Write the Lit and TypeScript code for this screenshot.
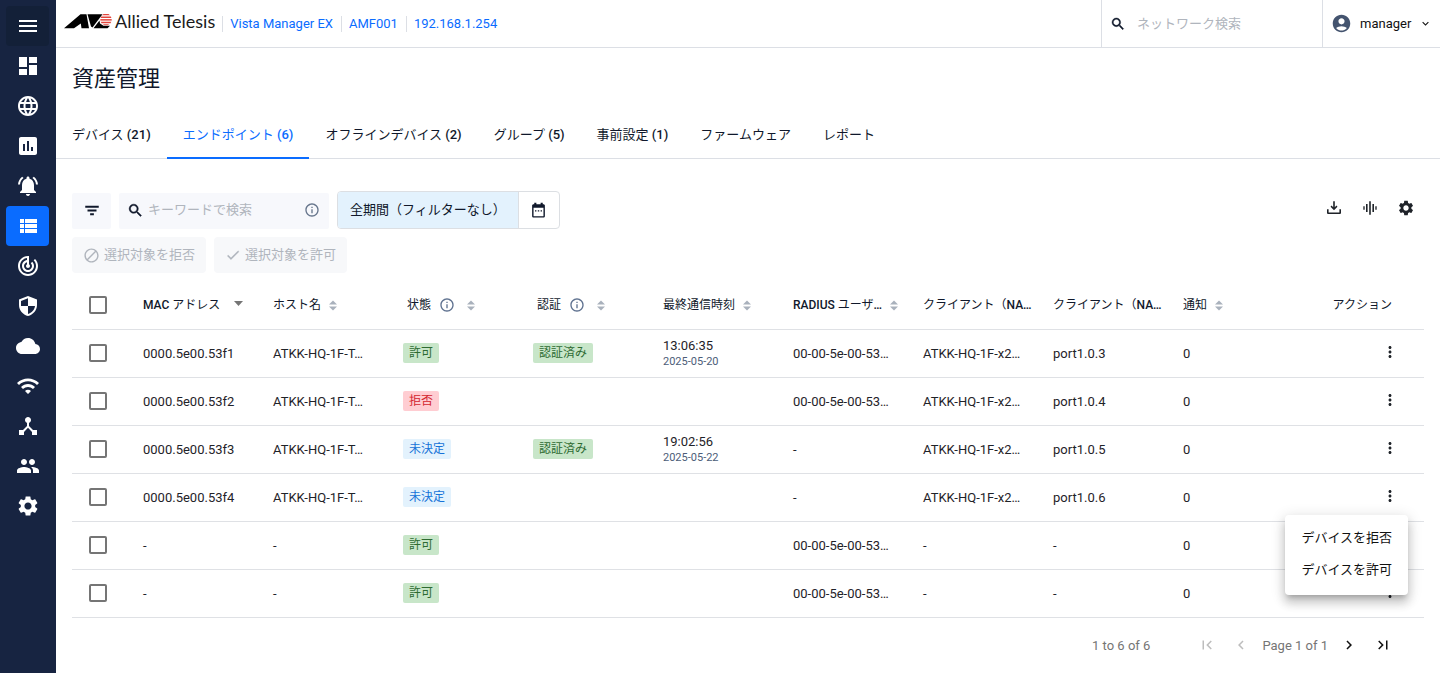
import { LitElement, html, css, svg, nothing } from "lit";
import { customElement, property, state } from "lit/decorators.js";
import { classMap } from "lit/directives/class-map.js";

const ICONS: Record<string, string> = {
  menu: "M3 18h18v-2H3v2zm0-5h18v-2H3v2zm0-7v2h18V6H3z",
  dashboard: "M3 13h8V3H3v10zm0 8h8v-6H3v6zm10 0h8V11h-8v10zm0-18v6h8V3h-8z",
  globe:
    "M11.99 2C6.47 2 2 6.48 2 12s4.47 10 9.99 10C17.52 22 22 17.52 22 12S17.52 2 11.99 2zm6.93 6h-2.95c-.32-1.25-.78-2.45-1.38-3.56 1.84.63 3.37 1.91 4.33 3.56zM12 4.04c.83 1.2 1.48 2.53 1.91 3.96h-3.82c.43-1.43 1.08-2.76 1.91-3.96zM4.26 14C4.1 13.36 4 12.69 4 12s.1-1.36.26-2h3.38c-.08.66-.14 1.32-.14 2s.06 1.34.14 2H4.26zm.82 2h2.95c.32 1.25.78 2.45 1.38 3.56-1.84-.63-3.37-1.9-4.33-3.56zm2.95-8H5.08c.96-1.66 2.49-2.93 4.33-3.56C8.81 5.55 8.35 6.75 8.03 8zM12 19.96c-.83-1.2-1.48-2.53-1.91-3.96h3.82c-.43 1.43-1.08 2.76-1.91 3.96zM14.34 14H9.66c-.09-.66-.16-1.32-.16-2s.07-1.35.16-2h4.68c.09.65.16 1.32.16 2s-.07 1.34-.16 2zm.25 5.56c.6-1.11 1.06-2.31 1.38-3.56h2.95c-.96 1.65-2.49 2.93-4.33 3.56zM16.36 14c.08-.66.14-1.32.14-2s-.06-1.34-.14-2h3.38c.16.64.26 1.31.26 2s-.1 1.36-.26 2h-3.38z",
  chart:
    "M19 3H5c-1.1 0-2 .9-2 2v14c0 1.1.9 2 2 2h14c1.1 0 2-.9 2-2V5c0-1.1-.9-2-2-2zM9 17H7v-7h2v7zm4 0h-2V7h2v10zm4 0h-2v-4h2v4z",
  bell: "M7.58 4.08L6.15 2.65C3.75 4.48 2.17 7.3 2.03 10.5h2c.15-2.65 1.51-4.97 3.55-6.42zm12.39 6.42h2c-.15-3.2-1.73-6.02-4.12-7.85l-1.42 1.43c2.02 1.45 3.39 3.77 3.54 6.42zM18 11c0-3.07-1.64-5.64-4.5-6.32V4c0-.83-.67-1.5-1.5-1.5s-1.5.67-1.5 1.5v.68C7.63 5.36 6 7.92 6 11v5l-2 2v1h16v-1l-2-2v-5zm-6 11c.14 0 .27-.01.4-.04.65-.14 1.18-.58 1.44-1.18.1-.24.15-.5.15-.78h-4c.01 1.1.9 2 2.01 2z",
  list: "M4 14h4v-4H4v4zm0 5h4v-4H4v4zM4 9h4V5H4v4zm5 5h12v-4H9v4zm0 5h12v-4H9v4zM9 5v4h12V5H9z",
  radar:
    "M19.07 4.93l-1.41 1.41C19.1 7.79 20 9.79 20 12c0 4.42-3.58 8-8 8s-8-3.58-8-8c0-4.08 3.05-7.44 7-7.93v2.02C8.16 6.57 6 9.03 6 12c0 3.31 2.69 6 6 6s6-2.69 6-6c0-1.66-.67-3.16-1.76-4.24l-1.41 1.41C15.55 9.9 16 10.9 16 12c0 2.21-1.79 4-4 4s-4-1.79-4-4c0-1.86 1.28-3.41 3-3.86v2.14c-.6.35-1 .98-1 1.72 0 1.1.9 2 2 2s2-.9 2-2c0-.74-.4-1.38-1-1.72V2h-1C6.48 2 2 6.48 2 12s4.48 10 10 10 10-4.48 10-10c0-2.76-1.12-5.26-2.93-7.07z",
  shield:
    "M12 2L3 5.400v5.600c0 5.100 3.840 9.850 9 11 5.160-1.150 9-5.900 9-11V5.400L12 2zM12 4.300V12H5V6.900zM12 12h7c-.53 3.800-3.280 6.900-7 8z",
  cloud:
    "M19.35 10.04C18.67 6.59 15.64 4 12 4 9.11 4 6.6 5.64 5.35 8.04 2.34 8.36 0 10.91 0 14c0 3.31 2.69 6 6 6h13c2.76 0 5-2.24 5-5 0-2.64-2.05-4.78-4.65-4.96z",
  wifi: "M1 9l2 2c4.97-4.97 13.03-4.97 18 0l2-2C16.93 2.93 7.08 2.93 1 9zm8 8l3 3 3-3c-1.65-1.66-4.34-1.66-6 0zm-4-4l2 2c2.76-2.76 7.24-2.76 10 0l2-2C15.14 9.14 8.87 9.14 5 13z",
  hub: "M17 16l-4-4V8.82C14.16 8.4 15 7.3 15 6c0-1.66-1.34-3-3-3S9 4.34 9 6c0 1.3.84 2.4 2 2.82V12l-4 4H3v5h5v-3.05l4-4.2 4 4.2V21h5v-5h-4z",
  users:
    "M16 11c1.66 0 2.99-1.34 2.99-3S17.66 5 16 5c-1.66 0-3 1.34-3 3s1.34 3 3 3zm-8 0c1.66 0 2.99-1.34 2.99-3S9.66 5 8 5C6.34 5 5 6.34 5 8s1.34 3 3 3zm0 2c-2.33 0-7 1.17-7 3.5V19h14v-2.5c0-2.33-4.67-3.5-7-3.5zm8 0c-.29 0-.62.02-.97.05 1.16.84 1.97 1.97 1.97 3.45V19h6v-2.5c0-2.33-4.67-3.5-7-3.5z",
  settings:
    "M19.14 12.94c.04-.3.06-.61.06-.94 0-.32-.02-.64-.07-.94l2.03-1.58c.18-.14.23-.41.12-.61l-1.92-3.32c-.12-.22-.37-.29-.59-.22l-2.39.96c-.5-.38-1.03-.7-1.62-.94l-.36-2.54c-.04-.24-.24-.41-.48-.41h-3.84c-.24 0-.43.17-.47.41l-.36 2.54c-.59.24-1.13.57-1.62.94l-2.39-.96c-.22-.08-.47 0-.59.22L2.74 8.87c-.12.21-.08.47.12.61l2.03 1.58c-.05.3-.09.63-.09.94s.02.64.07.94l-2.03 1.58c-.18.14-.23.41-.12.61l1.92 3.32c.12.22.37.29.59.22l2.39-.96c.5.38 1.03.7 1.62.94l.36 2.54c.05.24.24.41.48.41h3.84c.24 0 .44-.17.47-.41l.36-2.54c.59-.24 1.13-.56 1.62-.94l2.39.96c.22.08.47 0 .59-.22l1.92-3.32c.12-.22.07-.47-.12-.61l-2.01-1.58zM12 15.6c-1.98 0-3.6-1.62-3.6-3.6s1.62-3.6 3.6-3.6 3.6 1.62 3.6 3.6-1.62 3.6-3.6 3.6z",
  search:
    "M15.5 14h-.79l-.28-.27C15.41 12.59 16 11.11 16 9.5 16 5.91 13.09 3 9.5 3S3 5.91 3 9.5 5.91 16 9.5 16c1.61 0 3.09-.59 4.23-1.57l.27.28v.79l5 4.99L20.49 19l-4.99-5zm-6 0C7.01 14 5 11.99 5 9.5S7.01 5 9.5 5 14 7.01 14 9.5 11.99 14 9.5 14z",
  account:
    "M12 2C6.48 2 2 6.48 2 12s4.48 10 10 10 10-4.48 10-10S17.52 2 12 2zm0 4c1.93 0 3.5 1.57 3.5 3.5S13.93 13 12 13s-3.5-1.57-3.5-3.5S10.07 6 12 6zm0 14c-2.03 0-4.43-.82-6.14-2.88C7.55 15.8 9.68 15 12 15s4.45.8 6.14 2.12C16.43 19.18 14.03 20 12 20z",
  down: "M7.41 8.59L12 13.17l4.59-4.58L18 10l-6 6-6-6z",
  filter: "M9.500 17.500h5v-2.500h-5v2.500zM3 5v2.500h18V5H3zm3 7.500h12V10H6v2.500z",
  info: "M11 7h2v2h-2zm0 4h2v6h-2zm1-9C6.48 2 2 6.48 2 12s4.48 10 10 10 10-4.48 10-10S17.52 2 12 2zm0 18c-4.41 0-8-3.59-8-8s3.59-8 8-8 8 3.59 8 8-3.59 8-8 8z",
  calendar:
    "M9 11.5H7v2h2v-2zm4 0h-2v2h2v-2zm4 0h-2v2h2v-2zM19 3h-1V1h-3v2H9V1H6v2H5c-1.11 0-2 .9-2 2v15c0 1.1.89 2 2 2h14c1.1 0 2-.9 2-2V5c0-1.1-.9-2-2-2zm0 17H5V8h14v12z",
  block:
    "M12 2C6.48 2 2 6.48 2 12s4.48 10 10 10 10-4.48 10-10S17.52 2 12 2zM4 12c0-4.420 3.580-8 8-8 1.850 0 3.550.63 4.900 1.690L5.690 16.900A7.900 7.900 0 0 1 4 12zM12 20c-1.850 0-3.550-.63-4.900-1.690L18.310 7.100A7.900 7.900 0 0 1 20 12c0 4.420-3.580 8-8 8z",
  check: "M9 16.170L4.830 12l-1.420 1.410L9 19 21 7l-1.410-1.410z",
  download:
    "M13.200 2h-2.400v8.800L8.400 8.400 6.800 10l5.200 5.200 5.200-5.200-1.600-1.600-2.400 2.400V2zM1.500 14v5c0 1.100.9 2 2 2h17c1.100 0 2-.9 2-2v-5h-2.400v4.600H3.900V14z",
  wave: "M2 9.500h2v5H2zM6 6h2.400v12H6zM10.800 2h2.400v20h-2.400zM15.600 6H18v12h-2.400zM20 9.500h2v5h-2z",
  more: "M12 8c1.100 0 2-.9 2-2s-.9-2-2-2-2 .9-2 2 .9 2 2 2zm0 2c-1.100 0-2 .9-2 2s.9 2 2 2 2-.9 2-2-.9-2-2-2zm0 6c-1.100 0-2 .9-2 2s.9 2 2 2 2-.9 2-2-.9-2-2-2z",
  first: "M18.410 16.590L13.820 12l4.590-4.590L17 6l-6 6 6 6zM6 6h2v12H6z",
  prev: "M15.410 7.410L14 6l-6 6 6 6 1.410-1.410L10.830 12z",
  next: "M10 6L8.590 7.410 13.170 12l-4.580 4.590L10 18l6-6z",
  last: "M5.590 7.410L10.180 12l-4.590 4.590L7 18l6-6-6-6zM16 6h2v12h-2z",
};

const icon = (name: string, size: number, stroke = 0) => svg`
  <svg class="icon" width=${size} height=${size} viewBox="0 0 24 24" fill="currentColor"
    stroke="currentColor" stroke-width=${stroke} aria-hidden="true">
    <path d=${ICONS[name]} fill-rule="evenodd"></path>
  </svg>`;

const NAV = [
  ["dashboard", "ダッシュボード"],
  ["globe", "ネットワークマップ"],
  ["chart", "統計"],
  ["bell", "イベント"],
  ["list", "資産管理"],
  ["radar", "監視"],
  ["shield", "セキュリティー"],
  ["cloud", "クラウド"],
  ["wifi", "無線"],
  ["hub", "SD-WAN"],
  ["users", "ユーザー管理"],
  ["settings", "システム管理"],
];

const TABS: [string, string][] = [
  ["デバイス", "(21)"],
  ["エンドポイント", "(6)"],
  ["オフラインデバイス", "(2)"],
  ["グループ", "(5)"],
  ["事前設定", "(1)"],
  ["ファームウェア", ""],
  ["レポート", ""],
];

type Status = "allow" | "deny" | "pending";
const STATUS_LABEL: Record<Status, string> = { allow: "許可", deny: "拒否", pending: "未決定" };

interface Endpoint {
  mac: string;
  host: string;
  status: Status;
  auth?: boolean;
  time?: string;
  date?: string;
  radius: string;
  client: string;
  port: string;
}

const HOST = "ATKK-HQ-1F-T…";
const CLIENT = "ATKK-HQ-1F-x2…";
const RADIUS = "00-00-5e-00-53…";

const ROWS: Endpoint[] = [
  { mac: "0000.5e00.53f1", host: HOST, status: "allow", auth: true, time: "13:06:35", date: "2025-05-20", radius: RADIUS, client: CLIENT, port: "port1.0.3" },
  { mac: "0000.5e00.53f2", host: HOST, status: "deny", radius: RADIUS, client: CLIENT, port: "port1.0.4" },
  { mac: "0000.5e00.53f3", host: HOST, status: "pending", auth: true, time: "19:02:56", date: "2025-05-22", radius: "-", client: CLIENT, port: "port1.0.5" },
  { mac: "0000.5e00.53f4", host: HOST, status: "pending", radius: "-", client: CLIENT, port: "port1.0.6" },
  { mac: "-", host: "-", status: "allow", radius: RADIUS, client: "-", port: "-" },
  { mac: "-", host: "-", status: "allow", radius: RADIUS, client: "-", port: "-" },
];

const base = css`
  * {
    box-sizing: border-box;
  }
  button,
  input {
    font: inherit;
    color: inherit;
    border: 0;
    padding: 0;
    margin: 0;
    background: none;
    outline: none;
  }
  button {
    cursor: pointer;
    display: inline-flex;
    align-items: center;
    justify-content: center;
  }
  input::placeholder {
    color: #b0b5bd;
    opacity: 1;
  }
  a {
    color: inherit;
    text-decoration: none;
  }
  .icon {
    display: block;
    flex: none;
  }
`;

@customElement("side-nav")
class SideNav extends LitElement {
  static styles = [
    base,
    css`
      :host {
        display: block;
        flex: none;
        width: 56px;
        padding: 6px 7px 6px 6px;
        background: #172441;
        color: #fff;
      }
      nav {
        display: flex;
        flex-direction: column;
      }
      .item {
        display: flex;
        width: 100%;
        height: 40px;
        align-items: center;
        justify-content: center;
        border-radius: 4px;
      }
      .toggle {
        background: #132038;
      }
      .active {
        background: #0a6cff;
      }
    `,
  ];
  render() {
    return html`<nav aria-label="メインメニュー">
      <button class="item toggle" aria-label="メニュー">${icon("menu", 24)}</button>
      ${NAV.map(
        ([name, label]) =>
          html`<a href="#" class=${classMap({ item: true, active: name === "list" })} aria-label=${label}>${icon(name, 24)}</a>`
      )}
    </nav>`;
  }
}

@customElement("top-bar")
class TopBar extends LitElement {
  static styles = [
    base,
    css`
      :host {
        display: flex;
        height: 48px;
        align-items: stretch;
        border-bottom: 1px solid #dcdfe5;
        padding-left: 8px;
      }
      .brand {
        display: flex;
        align-items: center;
        gap: 2px;
        padding-bottom: 6px;
        margin-right: 7px;
        font-family: Lato, sans-serif;
        font-size: 18px;
        line-height: 20px;
        color: #1a1a1a;
        white-space: nowrap;
      }
      .links {
        display: flex;
        align-items: center;
        flex: 1;
        color: #0a6cff;
        white-space: nowrap;
      }
      .links a {
        padding: 0 8px 0 7px;
        line-height: 16px;
        border-left: 1px solid #dcdfe5;
      }
      .search {
        display: flex;
        align-items: center;
        width: 221px;
        padding: 0 8px;
        gap: 11px;
        border-left: 1px solid #dcdfe5;
      }
      .search input {
        flex: 1;
        min-width: 0;
        height: 32px;
      }
      .user {
        width: 118px;
        justify-content: flex-start;
        padding-left: 8px;
        border-left: 1px solid #dcdfe5;
        color: #111;
      }
      .avatar {
        color: #44546f;
        margin-right: 8px;
      }
      .name {
        flex: 1;
        text-align: left;
      }
      .caret {
        margin-right: 8px;
      }
    `,
  ];
  render() {
    return html`
      <a class="brand" href="#">
        <svg class="icon" width="49" height="16" viewBox="0 0 49 16" aria-hidden="true">
          <path d="M0 15.200 16.500 1.200H22.500L25 15.200H17.500L16.800 10.500 10 15.200z" fill="#000"></path>
          <path d="M23.500 1.200H38.500L28.500 14.500 27 13.500z" fill="#000"></path>
          <path d="M35.500 7.500 29.500 15.200H43.500L46 12.800H39.500L36 10.500z" fill="#000"></path>
          <g fill="#e2453c">
            <path d="M39.500 1h5l1.500 1.300h-8z"></path>
            <path d="M37.200 3.500h9.600l.6 1.400H36.600z"></path>
            <path d="M36.300 6.100h11.400v1.500H36.300z"></path>
            <path d="M36.700 8.800h10.600l-.8 1.400h-9z"></path>
            <path d="M38.600 11.300h6.800l-1.900 1h-3z"></path>
          </g>
        </svg>
        <span>Allied Telesis</span>
      </a>
      <div class="links">
        <a href="#">Vista Manager EX</a>
        <a href="#">AMF001</a>
        <a href="#">192.168.1.254</a>
      </div>
      <label class="search">
        ${icon("search", 16, 0.6)}
        <input type="search" placeholder="ネットワーク検索" aria-label="ネットワーク検索" />
      </label>
      <button class="user">
        <span class="avatar">${icon("account", 21)}</span>
        <span class="name">manager</span>
        <span class="caret">${icon("down", 13)}</span>
      </button>
    `;
  }
}

@customElement("endpoint-table")
class EndpointTable extends LitElement {
  @property({ type: Array }) rows: Endpoint[] = [];
  @state() private openRow = 3;

  static styles = [
    base,
    css`
      :host {
        display: block;
      }
      table {
        width: 100%;
        table-layout: fixed;
        border-collapse: collapse;
      }
      .c-check {
        width: 55px;
      }
      .c-data {
        width: 130px;
      }
      th,
      td {
        height: 48px;
        padding: 0 0 0 16px;
        border-bottom: 1px solid #dfe1e5;
        text-align: left;
        vertical-align: middle;
        white-space: nowrap;
        color: #1f2329;
      }
      th {
        font-size: 12px;
        font-weight: 400;
        color: #10182b;
      }
      .text {
        padding-top: 2px;
      }
      .head {
        display: flex;
        align-items: center;
        gap: 8px;
      }
      .inset {
        padding-left: 4px;
      }
      .latin {
        font-weight: 500;
      }
      .info {
        color: #5f7290;
        padding-right: 4px;
      }
      .sort {
        color: #a9b1bc;
        padding-top: 2px;
      }
      .sorted {
        color: #757575;
        padding: 0 0 2px 6px;
      }
      .check {
        appearance: none;
        display: block;
        width: 18px;
        height: 18px;
        border: 2px solid #757575;
        border-radius: 2px;
        margin-left: 1px;
      }
      .badge {
        display: inline-block;
        vertical-align: middle;
        padding: 0 6px;
        border-radius: 2px;
        font-size: 12px;
        line-height: 20px;
      }
      .allow {
        background: #c8e6c9;
        color: #2e6b32;
      }
      .deny {
        background: #ffcdd2;
        color: #d3262f;
      }
      .pending {
        background: #e3f2fd;
        color: #1672d8;
      }
      .time {
        line-height: 16px;
      }
      .date {
        font-size: 11px;
        line-height: 15px;
        color: #4c5d78;
      }
      .action {
        padding: 0 32px 0 0;
        text-align: right;
      }
      td.action {
        padding-bottom: 2px;
      }
      .anchor {
        position: relative;
        display: flex;
        justify-content: flex-end;
      }
      .more {
        width: 5px;
        height: 24px;
      }
      .menu {
        position: absolute;
        z-index: 1;
        top: 31px;
        right: -16px;
        padding: 7px 0 9px;
        background: #fff;
        border-radius: 4px;
        box-shadow: 0 5px 5px -3px rgba(0, 0, 0, 0.2), 0 8px 10px 1px rgba(0, 0, 0, 0.14), 0 3px 14px 2px rgba(0, 0, 0, 0.12);
      }
      .menu button {
        display: block;
        height: 32px;
        padding: 0 16px;
        color: #111;
      }
    `,
  ];

  private sort() {
    return svg`<svg class="icon" width="8" height="11" viewBox="0 0 8 11" fill="currentColor" aria-hidden="true">
      <path d="M4 0.500 8 4.500H0zM0 6.500h8L4 10.500z"></path></svg>`;
  }

  private th(text: unknown, opts: { info?: boolean; sort?: boolean } = {}) {
    return html`<th scope="col">
      <div class=${classMap({ head: true, inset: !!opts.info })}>
        <span>${text}</span>
        ${opts.info ? html`<span class="info">${icon("info", 16)}</span>` : nothing}
        ${opts.sort === false ? nothing : html`<span class="sort">${this.sort()}</span>`}
      </div>
    </th>`;
  }

  private row(r: Endpoint, i: number) {
    return html`<tr>
      <td><input class="check" type="checkbox" aria-label="行 ${i + 1} を選択" /></td>
      <td class="text">${r.mac}</td>
      <td class="text">${r.host}</td>
      <td><span class="badge ${r.status}">${STATUS_LABEL[r.status]}</span></td>
      <td>${r.auth ? html`<span class="badge allow">認証済み</span>` : nothing}</td>
      <td>
        ${r.time ? html`<div class="time">${r.time}</div><div class="date">${r.date}</div>` : nothing}
      </td>
      <td class="text">${r.radius}</td>
      <td class="text">${r.client}</td>
      <td class="text">${r.port}</td>
      <td class="text">0</td>
      <td class="action">
        <div class="anchor">
          <button class="more" aria-label="アクション" @click=${() => (this.openRow = this.openRow === i ? -1 : i)}>
            ${icon("more", 18)}
          </button>
          ${this.openRow === i
            ? html`<div class="menu" role="menu">
                <button role="menuitem">デバイスを拒否</button>
                <button role="menuitem">デバイスを許可</button>
              </div>`
            : nothing}
        </div>
      </td>
    </tr>`;
  }

  render() {
    const latin = (t: string) => html`<span class="latin">${t}</span>`;
    return html`<table>
      <colgroup>
        <col class="c-check" />
        ${Array.from({ length: 9 }, () => html`<col class="c-data" />`)}
        <col />
      </colgroup>
      <thead>
        <tr>
          <th><input class="check" type="checkbox" aria-label="すべて選択" /></th>
          <th scope="col" aria-sort="descending">
            <div class="head">
              <span>${latin("MAC")} アドレス</span>
              <span class="sorted">
                <svg class="icon" width="9" height="5" viewBox="0 0 9 5" fill="currentColor" aria-hidden="true">
                  <path d="M0 0h9L4.500 5z"></path>
                </svg>
              </span>
            </div>
          </th>
          ${this.th("ホスト名")} ${this.th("状態", { info: true })} ${this.th("認証", { info: true })}
          ${this.th("最終通信時刻")} ${this.th(html`${latin("RADIUS")} ユーザ${latin("…")}`)}
          ${this.th(html`クライアント（${latin("NA…")}`, { sort: false })}
          ${this.th(html`クライアント（${latin("NA…")}`, { sort: false })} ${this.th("通知")}
          <th scope="col" class="action">アクション</th>
        </tr>
      </thead>
      <tbody>
        ${this.rows.map((r, i) => this.row(r, i))}
      </tbody>
    </table>`;
  }
}

@customElement("app-root")
class AppRoot extends LitElement {
  @state() private tab = 1;

  static styles = [
    base,
    css`
      :host {
        display: flex;
        min-height: 100vh;
        background: #fff;
        color: #10182b;
        font-family: Roboto, "Noto Sans CJK JP", sans-serif;
        font-size: 13px;
        line-height: 18px;
      }
      .page {
        flex: 1;
        min-width: 0;
      }
      h1 {
        margin: 0;
        padding: 16px 16px 0;
        font-size: 22px;
        line-height: 30px;
        font-weight: 400;
      }
      .tabs {
        display: flex;
        margin-top: 16px;
        border-bottom: 1px solid #dcdfe5;
      }
      .tab {
        height: 49px;
        padding: 2px 16px 0;
        margin-bottom: -1px;
        border-bottom: 2px solid transparent;
        white-space: pre;
      }
      .count {
        font-weight: 500;
      }
      .selected {
        color: #0a6cff;
        border-color: #0a6cff;
      }
      .body {
        padding: 32px 16px 0;
      }
      .toolbar {
        display: flex;
        align-items: flex-end;
        gap: 8px;
      }
      .filter {
        width: 39px;
        height: 36px;
        background: #f7f8fc;
        border-radius: 2px;
      }
      .keyword {
        display: flex;
        align-items: center;
        gap: 4px;
        width: 210px;
        height: 36px;
        padding: 0 9px 2px 8px;
        background: #f7f8fc;
        border-radius: 2px;
      }
      .keyword input {
        flex: 1;
        min-width: 0;
      }
      .hint {
        color: #66758c;
      }
      .period {
        display: flex;
        height: 38px;
        border: 1px solid #dcdfe3;
        border-radius: 4px;
        overflow: hidden;
      }
      .range {
        padding: 0 12px;
        background: #e3f2fd;
        border-right: 1px solid #dcdfe3;
      }
      .pick {
        width: 40px;
      }
      .tools {
        display: flex;
        align-self: center;
        gap: 18px;
        margin-left: auto;
        padding: 0 9px 4px 0;
        color: #1f2329;
      }
      .tools button {
        width: 18px;
      }
      .bulk {
        display: flex;
        gap: 8px;
        margin: 8px 0;
      }
      .bulk button {
        height: 36px;
        padding: 0 11px;
        gap: 4px;
        background: #f7f8fa;
        border-radius: 4px;
        color: #b0b5bd;
      }
      .pager {
        display: flex;
        align-items: center;
        justify-content: flex-end;
        height: 54px;
        padding-right: 32px;
        color: #757575;
      }
      .pager span {
        padding-top: 2px;
      }
      .total {
        margin-right: 48px;
      }
      .pager button {
        width: 18px;
        height: 24px;
        color: #111;
      }
      .pager button:disabled {
        color: #bdbdbd;
      }
      .pages {
        display: flex;
        align-items: center;
        gap: 16px;
      }
      .current {
        margin: 0 -4px;
      }
    `,
  ];

  render() {
    return html`
      <side-nav></side-nav>
      <div class="page">
        <top-bar></top-bar>
        <main>
          <h1>資産管理</h1>
          <div class="tabs" role="tablist">
            ${TABS.map(
              ([label, count], i) =>
                html`<button
                  role="tab"
                  aria-selected=${i === this.tab ? "true" : "false"}
                  class=${classMap({ tab: true, selected: i === this.tab })}
                  @click=${() => (this.tab = i)}
                >${label}${count ? html` <span class="count">${count}</span>` : nothing}</button>`
            )}
          </div>
          <div class="body">
            <div class="toolbar">
              <button class="filter" aria-label="フィルター">${icon("filter", 18)}</button>
              <label class="keyword">
                ${icon("search", 17, 0.6)}
                <input type="text" placeholder="キーワードで検索" aria-label="キーワードで検索" />
                <span class="hint">${icon("info", 16)}</span>
              </label>
              <div class="period">
                <button class="range">全期間（フィルターなし）</button>
                <button class="pick" aria-label="期間を選択">${icon("calendar", 17)}</button>
              </div>
              <div class="tools">
                <button aria-label="ダウンロード">${icon("download", 16)}</button>
                <button aria-label="列の幅">${icon("wave", 16)}</button>
                <button aria-label="設定">${icon("settings", 18)}</button>
              </div>
            </div>
            <div class="bulk">
              <button disabled>${icon("block", 17)}選択対象を拒否</button>
              <button disabled>${icon("check", 16, 0.4)}選択対象を許可</button>
            </div>
            <endpoint-table .rows=${ROWS}></endpoint-table>
            <div class="pager">
              <span class="total">1 to 6 of 6</span>
              <div class="pages">
                <button disabled aria-label="最初のページ">${icon("first", 18)}</button>
                <button disabled aria-label="前のページ">${icon("prev", 18)}</button>
                <span class="current">Page 1 of 1</span>
                <button aria-label="次のページ">${icon("next", 18)}</button>
                <button aria-label="最後のページ">${icon("last", 18)}</button>
              </div>
            </div>
          </div>
        </main>
      </div>
    `;
  }
}
